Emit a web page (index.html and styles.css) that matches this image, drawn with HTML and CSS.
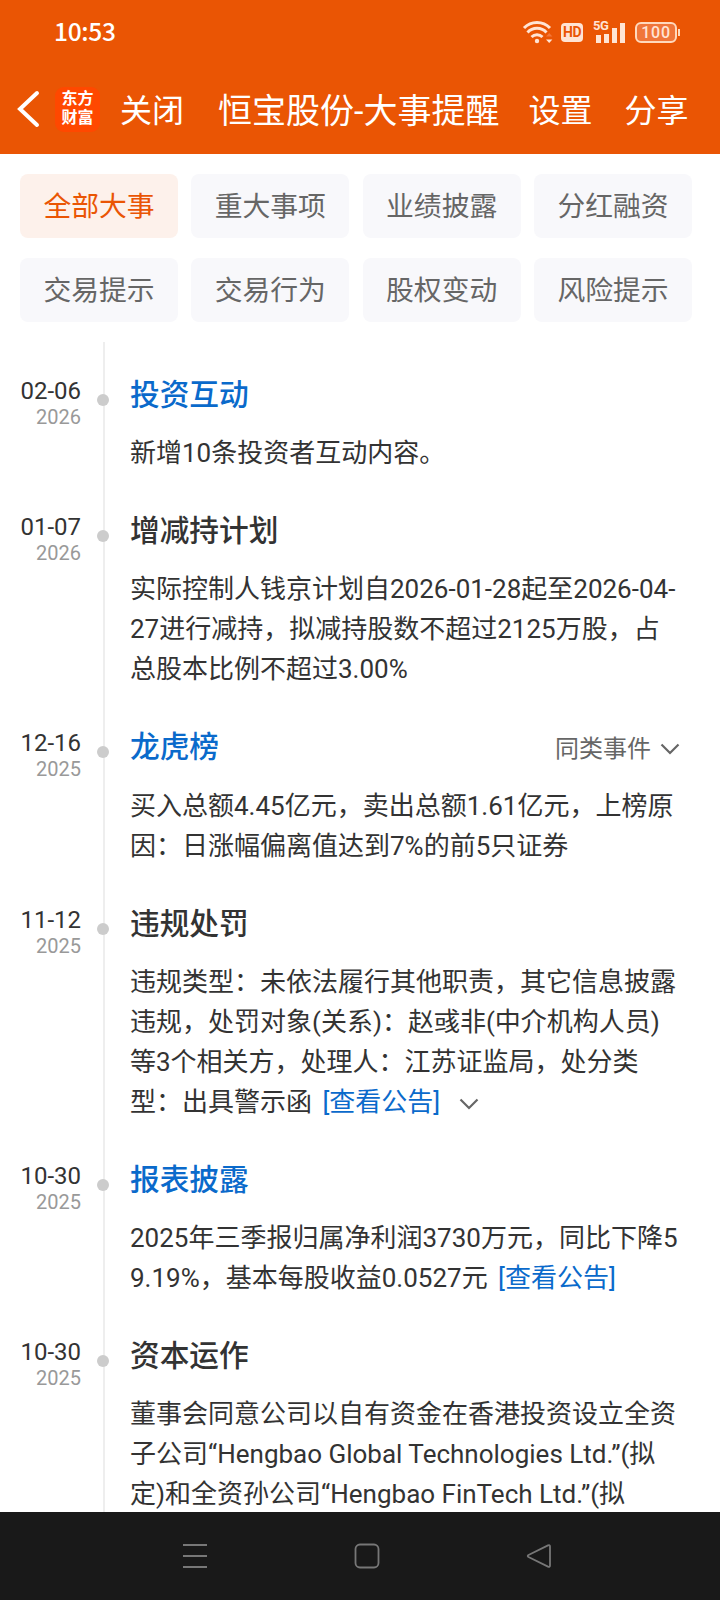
FILE: index.html
```html
<!DOCTYPE html>
<html lang="zh-CN">
  <head>
    <meta charset="UTF-8" />
    <meta name="viewport" content="width=device-width, initial-scale=1.0" />
    <title>恒宝股份-大事提醒</title>
    <link rel="stylesheet" href="styles.css">
  </head>
  <body>
    <header>
      <div class="status">
        <span class="time">10:53</span>
        <div class="status-icons">
          <svg class="wifi" width="32" height="26" viewBox="0 0 32 26" fill="none" stroke="#ffe4d4" stroke-width="3">
            <path d="M2 9a18 18 0 0 1 26 0" />
            <path d="M5.5 13.500a13 13 0 0 1 19 0" />
            <path d="M9.500 18a8 8 0 0 1 11 0" />
            <circle cx="15" cy="22" r="2.2" fill="#ffe4d4" stroke="none" />
            <path d="M24 17.500l3.200-3.500 3.200 3.500z" fill="#f4773a" stroke="none" />
            <path d="M24 20.500l3.200 3.500 3.200-3.500z" fill="#ffe4d4" stroke="none" />
          </svg>
          <span class="hd">HD</span>
          <div class="signal">
            <span class="net">5G</span>
            <i class="b1"></i><i class="b2"></i><i class="b3"></i><i class="b4"></i>
          </div>
          <span class="battery">100</span>
        </div>
      </div>
      <nav>
        <svg class="back" width="24" height="40" viewBox="0 0 24 40" fill="none" stroke="#fff" stroke-width="4" stroke-linecap="round">
          <path d="M21 4L4 20l17 16" />
        </svg>
        <div class="logo">东方<br />财富</div>
        <span class="close">关闭</span>
        <h1>恒宝股份-大事提醒</h1>
        <span class="setting">设置</span>
        <span class="share">分享</span>
      </nav>
    </header>

    <div class="tabs">
      <button class="active">全部大事</button>
      <button>重大事项</button>
      <button>业绩披露</button>
      <button>分红融资</button>
      <button>交易提示</button>
      <button>交易行为</button>
      <button>股权变动</button>
      <button>风险提示</button>
    </div>

    <main class="timeline">
      <div class="item">
        <div class="date">02-06<small>2026</small></div>
        <div class="content">
          <h2 class="link">投资互动</h2>
          <p>新增10条投资者互动内容。</p>
        </div>
      </div>
      <div class="item">
        <div class="date">01-07<small>2026</small></div>
        <div class="content">
          <h2>增减持计划</h2>
          <p>
            实际控制人钱京计划自2026-01-28起至2026-04-<br />27进行减持，拟减持股数不超过2125万股，占<br />总股本比例不超过3.00%
          </p>
        </div>
      </div>
      <div class="item same">
        <div class="date">12-16<small>2025</small></div>
        <div class="content">
          <h2 class="link">
            龙虎榜
            <span class="more">同类事件
              <svg width="20" height="12" viewBox="0 0 20 12" fill="none" stroke="#666" stroke-width="2.2">
                <path d="M1.5 1.5L10 10l8.5-8.5" />
              </svg>
            </span>
          </h2>
          <p>
            买入总额4.45亿元，卖出总额1.61亿元，上榜原<br />因：日涨幅偏离值达到7%的前5只证券
          </p>
        </div>
      </div>
      <div class="item">
        <div class="date">11-12<small>2025</small></div>
        <div class="content">
          <h2>违规处罚</h2>
          <p>
            违规类型：未依法履行其他职责，其它信息披露<br />违规，处罚对象(关系)：赵彧非(中介机构人员)<br />等3个相关方，处理人：江苏证监局，处分类<br />型：出具警示函 <a>[查看公告]</a>
            <svg class="fold" width="20" height="12" viewBox="0 0 20 12" fill="none" stroke="#666" stroke-width="2.2">
              <path d="M1.5 1.5L10 10l8.5-8.5" />
            </svg>
          </p>
        </div>
      </div>
      <div class="item">
        <div class="date">10-30<small>2025</small></div>
        <div class="content">
          <h2 class="link">报表披露</h2>
          <p>
            2025年三季报归属净利润3730万元，同比下降5<br />9.19%，基本每股收益0.0527元 <a>[查看公告]</a>
          </p>
        </div>
      </div>
      <div class="item">
        <div class="date">10-30<small>2025</small></div>
        <div class="content">
          <h2>资本运作</h2>
          <p>
            董事会同意公司以自有资金在香港投资设立全资<br />子公司“Hengbao Global Technologies Ltd.”(拟<br />定)和全资孙公司“Hengbao FinTech Ltd.”(拟
          </p>
        </div>
      </div>
    </main>

    <footer>
      <svg width="26" height="26" viewBox="0 0 26 26" fill="none" stroke="#777" stroke-width="2">
        <path d="M1 2h24M1 13h24M1 24h24" />
      </svg>
      <svg width="26" height="26" viewBox="0 0 26 26" fill="none" stroke="#777" stroke-width="1.8">
        <rect x="1.500" y="1.500" width="23" height="23" rx="4.500" />
      </svg>
      <svg width="26" height="26" viewBox="0 0 26 26" fill="none" stroke="#777" stroke-width="1.8" stroke-linejoin="round">
        <path d="M2.500 12Q1 13 2.500 14L22 23.600Q24 24.500 24 22.500V3.500Q24 1.500 22 2.400z" />
      </svg>
    </footer>
  </body>
</html>
```
FILE: styles.css
```css
* {
  margin: 0;
  padding: 0;
  box-sizing: border-box;
}
body {
  width: 720px;
  height: 1600px;
  overflow: hidden;
  display: flex;
  flex-direction: column;
  background: #fff;
  color: #333;
  font-family: Roboto, "Noto Sans CJK SC", sans-serif;
  white-space: nowrap;
}
header {
  height: 154px;
  flex-shrink: 0;
  background: #ea5504;
  color: #fff;
}
.status {
  height: 64px;
  display: flex;
  align-items: center;
  justify-content: space-between;
  padding: 0 40px 0 54px;
}
.time {
  font: 500 24.5px/62px "Noto Sans CJK SC", sans-serif;
  letter-spacing: -0.3px;
  padding-bottom: 2px;
}
.status-icons {
  display: flex;
  align-items: center;
  color: #ffe4d4;
}
.wifi {
  margin-right: 7px;
}
.hd {
  width: 22px;
  height: 19px;
  border-radius: 4px;
  background: #ffe4d4;
  color: #ea5504;
  font-size: 14px;
  font-weight: 700;
  line-height: 19px;
  letter-spacing: -0.5px;
  text-align: center;
  margin-right: 11px;
}
.signal {
  position: relative;
  width: 31px;
  height: 22px;
  display: flex;
  align-items: flex-end;
  justify-content: space-between;
  padding-left: 2px;
  margin-right: 10px;
}
.signal i {
  width: 4.5px;
  background: #ffe4d4;
}
.b1 {
  height: 8px;
}
.b2 {
  height: 9px;
}
.b3 {
  height: 15px;
}
.b4 {
  height: 20px;
}
.net {
  position: absolute;
  left: -1px;
  top: -1px;
  font-size: 13px;
  font-weight: 700;
  line-height: 12px;
  letter-spacing: -0.5px;
}
.battery {
  position: relative;
  width: 42px;
  height: 21px;
  border: 2px solid #ffd9bd;
  border-radius: 6px;
  background: #f0763a;
  font-size: 16px;
  font-weight: 500;
  line-height: 18px;
  letter-spacing: 0.8px;
  text-align: center;
  margin-right: 3px;
}
.battery::after {
  content: "";
  position: absolute;
  right: -5px;
  top: 5px;
  width: 2px;
  height: 7px;
  background: #ffd9bd;
}
nav {
  height: 90px;
  display: flex;
  align-items: center;
  padding-left: 16px;
  font-size: 32px;
  line-height: 44px;
}
.close,
.setting,
.share,
nav h1 {
  padding-top: 3px;
}
.logo {
  width: 45px;
  height: 45px;
  border-radius: 9px;
  background: #ff4800;
  font-size: 16px;
  font-weight: 700;
  line-height: 19px;
  text-align: center;
  padding-top: 2px;
  margin: 0 20px 0 15px;
}
nav h1 {
  font-size: 34px;
  font-weight: 400;
  margin: 0 29px 0 34px;
}
.share {
  margin-left: 32px;
}
.tabs {
  display: grid;
  grid-template-columns: repeat(4, 158px);
  justify-content: space-between;
  row-gap: 20px;
  padding: 20px 28px 20px 20px;
}
.tabs button {
  height: 64px;
  border: 0;
  border-radius: 8px;
  background: #f8f8fb;
  color: #666;
  font-family: inherit;
  font-size: 27.8px;
  padding-bottom: 4px;
}
.tabs .active {
  background: #fdf1eb;
  color: #ea5504;
}
.timeline {
  flex: 1;
  min-height: 0;
  overflow: hidden;
  padding-top: 32px;
  background: linear-gradient(#eee, #eee) 103px 0 / 2px 100% no-repeat;
}
.item {
  display: flex;
  padding-bottom: 37px;
}
.date {
  position: relative;
  width: 81px;
  font-size: 24px;
  line-height: 28px;
  text-align: right;
  padding-top: 3px;
}
.date::after {
  content: "";
  position: absolute;
  left: 97px;
  top: 20px;
  width: 12px;
  height: 12px;
  border-radius: 50%;
  background: #ccc;
}
.date small {
  display: block;
  font-size: 20px;
  line-height: 24px;
  color: #999;
}
.content {
  width: 550px;
  margin-left: 49px;
}
.content h2 {
  display: flex;
  justify-content: space-between;
  height: 41px;
  font-size: 29.7px;
  font-weight: 500;
  line-height: 42px;
  margin-bottom: 18px;
}
.same h2 {
  margin-bottom: 19px;
}
.content .link,
.content a {
  color: #0a6acb;
}
.content a {
  margin-left: 4px;
}
.content p {
  font-size: 26px;
  line-height: 40px;
}
.more {
  display: flex;
  align-items: center;
  gap: 9px;
  font-size: 24px;
  font-weight: 400;
  color: #666;
  padding-top: 4px;
}
.fold {
  margin-left: 12px;
  vertical-align: 1px;
}
footer {
  height: 88px;
  flex-shrink: 0;
  display: flex;
  justify-content: space-between;
  align-items: center;
  padding: 0 168px 0 182px;
  background: #191919;
}
```
